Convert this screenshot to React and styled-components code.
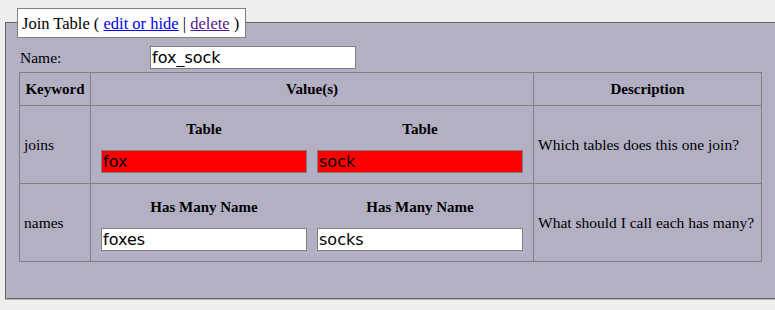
import React from 'react'
import styled, { createGlobalStyle } from 'styled-components'

const GlobalStyle = createGlobalStyle`
    html, body {
        margin: 0;
        padding: 0;
        background: #eeeeee;
        overflow: hidden;
        font-family: "Liberation Serif", "Times New Roman", serif;
        color: #000;
    }
`

const columns = [
    { key: 'a', width: 206 },
    { key: 'b', width: 206 },
]

const rows = [
    {
        keyword: 'joins',
        label: 'Table',
        values: ['fox', 'sock'],
        invalid: true,
        description: 'Which tables does this one join?',
    },
    {
        keyword: 'names',
        label: 'Has Many Name',
        values: ['foxes', 'socks'],
        invalid: false,
        description: 'What should I call each has many?',
    },
]

function App() {
    return (
        <Page>
            <GlobalStyle />
            <Box>
                <Legend>
                    Join Table ( <Link href="#edit">edit or hide</Link> | <Visited href="#delete">delete</Visited> )
                </Legend>
                <NameRow>
                    <NameLabel>Name:</NameLabel>
                    <TextBox defaultValue="fox_sock" />
                </NameRow>
                <Grid>
                    <HeadCell>Keyword</HeadCell>
                    <HeadCell>Value(s)</HeadCell>
                    <HeadCell>Description</HeadCell>
                    {rows.map(row => (
                        <React.Fragment key={row.keyword}>
                            <TextCell>{row.keyword}</TextCell>
                            <ValueCell>
                                {columns.map(c => (
                                    <SubHead key={c.key}>{row.label}</SubHead>
                                ))}
                                {row.values.map(v => (
                                    <TextBox key={v} defaultValue={v} $invalid={row.invalid} />
                                ))}
                            </ValueCell>
                            <TextCell>{row.description}</TextCell>
                        </React.Fragment>
                    ))}
                </Grid>
            </Box>
        </Page>
    )
}

export default App

const Page = styled.div`
    padding: 8px 0 0 5px;
`

const Box = styled.fieldset`
    box-sizing: border-box;
    width: 800px;
    margin: 0;
    padding: 8px 12px 36px 12px;
    border: 2px groove #b8b8b8;
    background: #b3b0c4;
    min-inline-size: 0;
`

const Legend = styled.legend`
    margin-left: -2px;
    padding: 6px 6px 4px 4px;
    background: #ffffff;
    border: 1px solid #808080;
    font-size: 16.5px;
    line-height: 18px;
`

const Link = styled.a`
    color: #0000ee;
    text-decoration: underline;
`

const Visited = styled(Link)`
    color: #551a8b;
`

const NameRow = styled.div`
    display: flex;
    align-items: center;
    height: 23px;
    margin-left: 1px;
`

const NameLabel = styled.span`
    width: 130px;
    font-size: 15.5px;
    line-height: 18px;
`

const TextBox = styled.input`
    box-sizing: border-box;
    width: 206px;
    height: 23px;
    margin: 0;
    padding: 0 1px;
    border: 1px solid #7f7f7f;
    background: ${props => (props.$invalid ? '#ff0000' : '#ffffff')};
    font-family: "DejaVu Sans", sans-serif;
    font-size: 16px;
    color: #000;
    outline: none;
`

const Grid = styled.div`
    display: grid;
    grid-template-columns: 71px 443px 228px;
    grid-template-rows: 33px 78px 78px;
    width: 743px;
    box-sizing: border-box;
    margin-top: 3px;
    border-left: 1px solid #808080;
    border-top: 1px solid #808080;
    & > * {
        box-sizing: border-box;
        border-right: 1px solid #808080;
        border-bottom: 1px solid #808080;
    }
`

const HeadCell = styled.div`
    display: flex;
    align-items: center;
    justify-content: center;
    font-weight: bold;
    font-size: 15px;
    line-height: 18px;
`

const TextCell = styled.div`
    display: flex;
    align-items: center;
    padding: 0 4px;
    white-space: nowrap;
    font-size: 15.5px;
    line-height: 18px;
`

const ValueCell = styled.div`
    display: grid;
    grid-template-columns: 206px 206px;
    grid-template-rows: 18px 23px;
    column-gap: 10px;
    row-gap: 12px;
    align-content: start;
    padding: 14px 10px 0 10px;
`

const SubHead = styled.div`
    text-align: center;
    font-weight: bold;
    font-size: 15px;
    line-height: 18px;
`
